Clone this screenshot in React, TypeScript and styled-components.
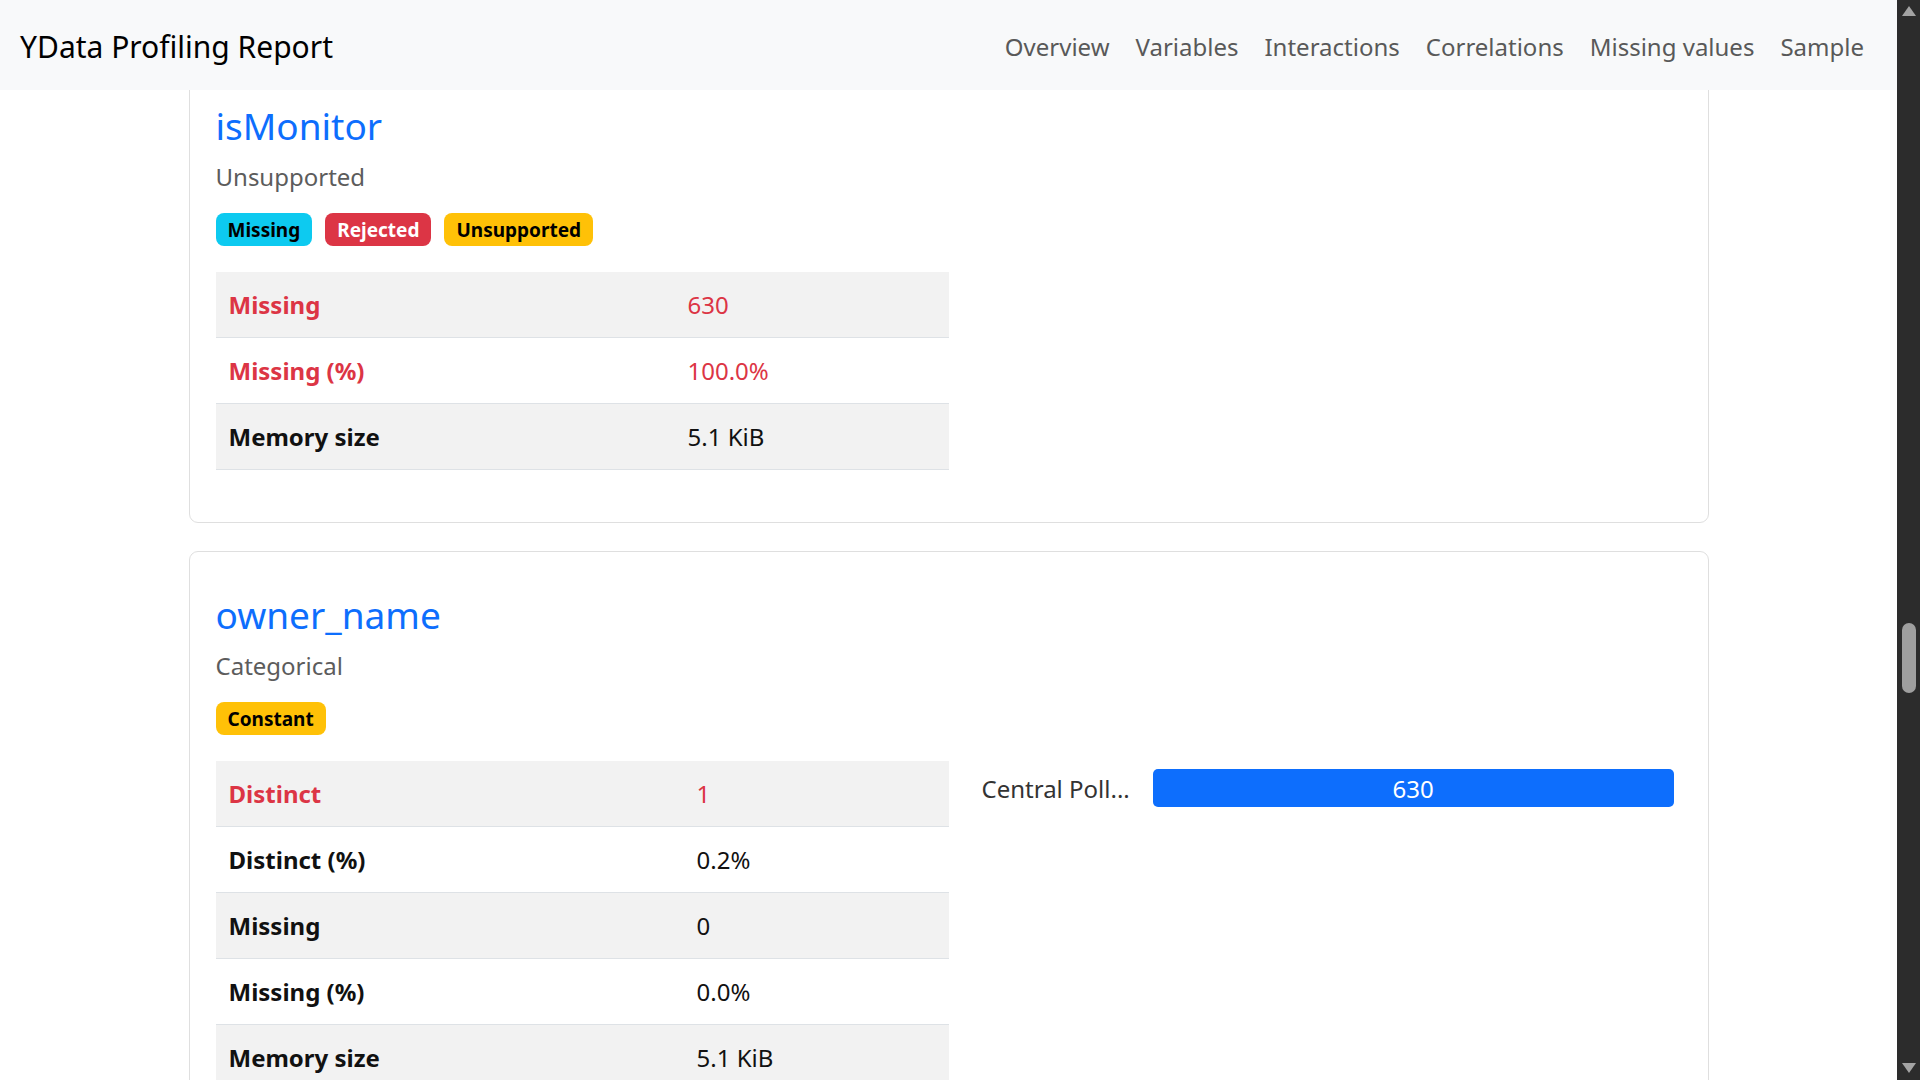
import React from "react";
import styled, { createGlobalStyle } from "styled-components";

const GlobalStyle = createGlobalStyle`
  html, body { margin: 0; padding: 0; background: #ffffff; }
  body {
    font-family: "Noto Sans", "Open Sans", sans-serif;
    color: #212529;
    overflow: hidden;
  }
  * { box-sizing: border-box; }
`;

const Shell = styled.div`
  display: flex;
  width: 100vw;
  height: 100vh;
  overflow: hidden;
`;

const Viewport = styled.div`
  position: relative;
  flex: 1;
  min-width: 0;
  height: 100%;
  overflow: hidden;
  background: #ffffff;
`;

const Navbar = styled.nav`
  position: absolute;
  top: 0;
  left: 0;
  right: 0;
  z-index: 10;
  height: 90px;
  display: flex;
  align-items: center;
  justify-content: space-between;
  padding: 4px 33px 0 20px;
  background: #f8f9fa;
`;

const Brand = styled.a`
  font-size: 30px;
  line-height: 1;
  color: #000000;
  text-decoration: none;
`;

const NavLinks = styled.div`
  display: flex;
  align-items: center;
  gap: 26px;
`;

const NavLink = styled.a`
  font-size: 24px;
  line-height: 1;
  color: #595959;
  text-decoration: none;
`;

const Main = styled.main`
  padding-top: 62px;
`;

const Container = styled.div`
  width: 1520px;
  margin: 0 auto;
  display: flex;
  flex-direction: column;
  gap: 28px;
`;

const Card = styled.section`
  border: 1px solid #dfdfdf;
  border-radius: 9px;
  padding: 41px 34px 52px 26px;
  background: #ffffff;
`;

const VarTitle = styled.h2`
  margin: 0;
  font-size: 37px;
  line-height: 43px;
  font-weight: 400;
  color: #0d6efd;
`;

const VarType = styled.div`
  margin-top: 12px;
  font-size: 24px;
  line-height: 36px;
  color: #5c5c5c;
`;

const Badges = styled.div`
  margin-top: 18px;
  display: flex;
  gap: 13px;
`;

const badgeColors = {
  info: { bg: "#0dcaf0", fg: "#000000" },
  danger: { bg: "#dc3545", fg: "#ffffff" },
  warning: { bg: "#ffc107", fg: "#000000" },
} as const;

type BadgeKind = keyof typeof badgeColors;

const Badge = styled.span<{ $kind: BadgeKind }>`
  display: inline-flex;
  align-items: center;
  height: 33px;
  padding: 0 12px;
  border-radius: 8px;
  font-size: 19px;
  font-weight: 700;
  background: ${(p) => badgeColors[p.$kind].bg};
  color: ${(p) => badgeColors[p.$kind].fg};
`;

const Body = styled.div`
  margin-top: 26px;
  display: grid;
  grid-template-columns: 733px 1fr;
  column-gap: 33px;
  align-items: start;
`;

const StatTable = styled.div`
  display: flex;
  flex-direction: column;
`;

const StatRow = styled.div<{ $striped: boolean; $labelWidth: number }>`
  display: grid;
  grid-template-columns: ${(p) => p.$labelWidth}px 1fr;
  align-items: center;
  height: 66px;
  border-bottom: 1px solid #dee2e6;
  background: ${(p) => (p.$striped ? "#f2f2f2" : "#ffffff")};
  font-size: 24px;
`;

const StatLabel = styled.div<{ $alert: boolean }>`
  padding-left: 13px;
  font-weight: 700;
  color: ${(p) => (p.$alert ? "#dc3545" : "#111111")};
`;

const StatValue = styled.div<{ $alert: boolean }>`
  color: ${(p) => (p.$alert ? "#dc3545" : "#111111")};
`;

const FreqRow = styled.div`
  margin-top: 8px;
  display: flex;
  align-items: center;
  gap: 23px;
`;

const FreqLabel = styled.span`
  font-size: 24px;
  color: #333333;
  white-space: nowrap;
`;

const FreqBar = styled.div`
  flex: 1;
  height: 38px;
  display: flex;
  align-items: center;
  justify-content: center;
  border-radius: 5px;
  background: #0d6efd;
  color: #ffffff;
  font-size: 24px;
`;

const Scrollbar = styled.div`
  flex: 0 0 23px;
  height: 100%;
  background: #2c2c2c;
  display: flex;
  flex-direction: column;
  align-items: center;
  padding: 6px 0 7px;
`;

const Arrow = styled.div<{ $dir: "up" | "down" }>`
  width: 0;
  height: 0;
  border-left: 7px solid transparent;
  border-right: 7px solid transparent;
  ${(p) =>
    p.$dir === "up"
      ? "border-bottom: 10px solid #a3a3a3;"
      : "border-top: 10px solid #a3a3a3;"}
`;

const Track = styled.div`
  flex: 1;
  width: 100%;
  display: flex;
  justify-content: center;
  padding-top: 607px;
`;

const Thumb = styled.div`
  width: 14px;
  height: 70px;
  border-radius: 7px;
  background: #9f9f9f;
`;

type Stat = { label: string; value: string; alert?: boolean };

type Variable = {
  name: string;
  type: string;
  badges: { text: string; kind: BadgeKind }[];
  labelWidth: number;
  stats: Stat[];
  freq?: { label: string; count: string };
};

const variables: Variable[] = [
  {
    name: "isMonitor",
    type: "Unsupported",
    badges: [
      { text: "Missing", kind: "info" },
      { text: "Rejected", kind: "danger" },
      { text: "Unsupported", kind: "warning" },
    ],
    labelWidth: 472,
    stats: [
      { label: "Missing", value: "630", alert: true },
      { label: "Missing (%)", value: "100.0%", alert: true },
      { label: "Memory size", value: "5.1 KiB" },
    ],
  },
  {
    name: "owner_name",
    type: "Categorical",
    badges: [{ text: "Constant", kind: "warning" }],
    labelWidth: 481,
    stats: [
      { label: "Distinct", value: "1", alert: true },
      { label: "Distinct (%)", value: "0.2%" },
      { label: "Missing", value: "0" },
      { label: "Missing (%)", value: "0.0%" },
      { label: "Memory size", value: "5.1 KiB" },
    ],
    freq: { label: "Central Poll...", count: "630" },
  },
];

const navItems = ["Overview", "Variables", "Interactions", "Correlations", "Missing values", "Sample"];

export default function App() {
  return (
    <>
      <GlobalStyle />
      <Shell>
        <Viewport>
          <Navbar>
            <Brand href="#">YData Profiling Report</Brand>
            <NavLinks>
              {navItems.map((n) => (
                <NavLink key={n} href="#">
                  {n}
                </NavLink>
              ))}
            </NavLinks>
          </Navbar>
          <Main>
            <Container>
              {variables.map((v) => (
                <Card key={v.name}>
                  <VarTitle>{v.name}</VarTitle>
                  <VarType>{v.type}</VarType>
                  <Badges>
                    {v.badges.map((b) => (
                      <Badge key={b.text} $kind={b.kind}>
                        {b.text}
                      </Badge>
                    ))}
                  </Badges>
                  <Body>
                    <StatTable>
                      {v.stats.map((s, i) => (
                        <StatRow key={s.label} $striped={i % 2 === 0} $labelWidth={v.labelWidth}>
                          <StatLabel $alert={!!s.alert}>{s.label}</StatLabel>
                          <StatValue $alert={!!s.alert}>{s.value}</StatValue>
                        </StatRow>
                      ))}
                    </StatTable>
                    {v.freq ? (
                      <FreqRow>
                        <FreqLabel>{v.freq.label}</FreqLabel>
                        <FreqBar>{v.freq.count}</FreqBar>
                      </FreqRow>
                    ) : (
                      <div />
                    )}
                  </Body>
                </Card>
              ))}
            </Container>
          </Main>
        </Viewport>
        <Scrollbar>
          <Arrow $dir="up" />
          <Track>
            <Thumb />
          </Track>
          <Arrow $dir="down" />
        </Scrollbar>
      </Shell>
    </>
  );
}
